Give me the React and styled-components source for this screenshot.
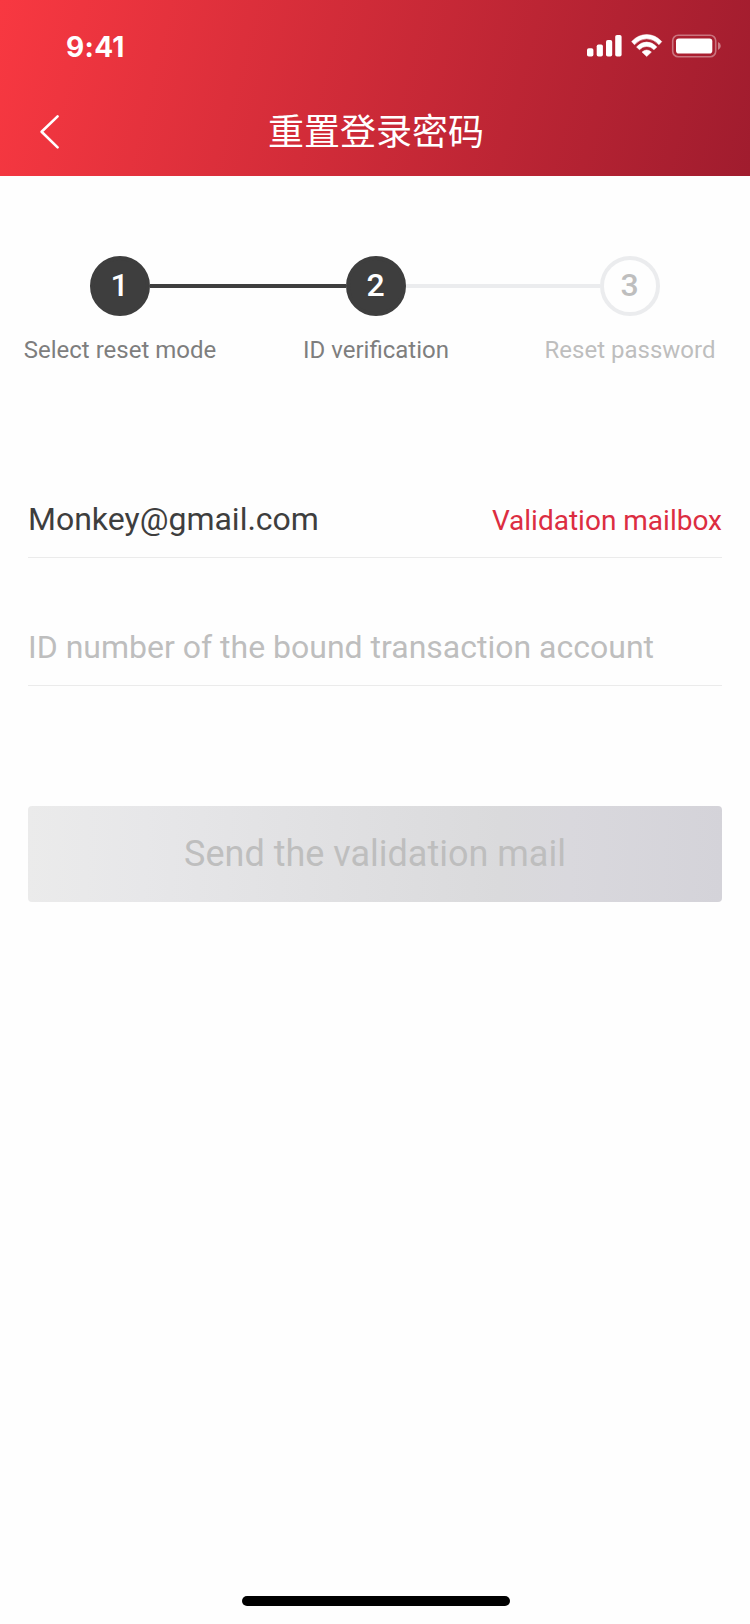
import React from "react";
import styled, { createGlobalStyle } from "styled-components";

const GlobalStyle = createGlobalStyle`
  * { box-sizing: border-box; }
  body {
    margin: 0;
    background: #fefefe;
    font-family: Roboto, "Noto Sans CJK SC", sans-serif;
  }
`;

const Screen = styled.div`
  width: 750px;
  height: 1624px;
  display: flex;
  flex-direction: column;
  background: #fefefe;
  overflow: hidden;
`;

const Header = styled.header`
  height: 176px;
  flex: none;
  background: linear-gradient(104deg, #f83841 0%, #a01c2e 100%);
  color: #fff;
`;

const StatusBar = styled.div`
  height: 88px;
  display: flex;
  justify-content: space-between;
  padding: 30px 29px 0 66px;
`;

const Time = styled.span`
  font: 700 28px/34px Inter, sans-serif;
  letter-spacing: 0.3px;
`;

const StatusIcons = styled.svg`
  display: block;
  width: 135px;
  height: 30px;
`;

const NavBar = styled.div`
  height: 88px;
  display: grid;
  grid-template-columns: 100px 1fr 100px;
  align-items: center;
`;

const BackButton = styled.button`
  height: 88px;
  padding: 0 0 0 38px;
  border: 0;
  background: none;
  display: flex;
  align-items: center;
`;

const Title = styled.h1`
  margin: 0;
  padding: 0 0 6px 2px;
  text-align: center;
  font: 400 36px/52px "Noto Sans CJK SC", sans-serif;
`;

const Stepper = styled.div`
  display: flex;
  padding: 80px 90px 0;
  height: 284px;
`;

const Step = styled.div`
  width: 60px;
  flex: none;
  display: flex;
  flex-direction: column;
  align-items: center;
  gap: 20px;
`;

const StepCircle = styled.div`
  width: 60px;
  height: 60px;
  padding-right: 1px;
  border-radius: 50%;
  border: 4px solid ${(p) => (p.$active ? "#3e3e3e" : "#ebecee")};
  background: ${(p) => (p.$active ? "#3e3e3e" : "#fefefe")};
  color: ${(p) => (p.$active ? "#fff" : "#bebebe")};
  font-size: 32px;
  line-height: 50px;
  font-weight: 500;
  text-align: center;
`;

const StepLabel = styled.span`
  white-space: nowrap;
  font-size: 24px;
  line-height: 28px;
  color: ${(p) => (p.$active ? "#7e7e7e" : "#bebebe")};
`;

const Connector = styled.div`
  width: ${(p) => p.$width}px;
  height: 4px;
  margin-top: 28px;
  background: ${(p) => (p.$active ? "#3e3e3e" : "#ebecee")};
`;

const Form = styled.main`
  padding: 0 28px;
  display: flex;
  flex-direction: column;
`;

const Field = styled.div`
  height: ${(p) => p.$height}px;
  padding-bottom: 18px;
  border-bottom: 1px solid #ebebeb;
  display: flex;
  align-items: flex-end;
  justify-content: space-between;
`;

const FieldText = styled.span`
  font-size: 32px;
  line-height: 40px;
  white-space: nowrap;
  color: ${(p) => (p.$placeholder ? "#bebebe" : "#3e3e3e")};
`;

const FieldLink = styled.a`
  font-size: 28px;
  line-height: 36px;
  color: #dc2d41;
`;

const SubmitButton = styled.button`
  margin-top: 120px;
  height: 96px;
  border: 0;
  border-radius: 4px;
  background: linear-gradient(92deg, #ebebeb 0%, #e7e7e9 17%, #dadadc 68%, #d9d8dd 78%, #d4d3d9 100%);
  color: #bebebe;
  font: 400 36px/44px Roboto, sans-serif;
`;

const HomeIndicator = styled.div`
  width: 268px;
  height: 10px;
  border-radius: 5px;
  background: #000;
  margin: auto 0 18px 242px;
`;

export default function App() {
  return (
    <Screen>
      <GlobalStyle />
      <Header>
        <StatusBar>
          <Time>9:41</Time>
          <StatusIcons viewBox="586 30 135 30" fill="#fff">
            <rect x="587" y="48.3" width="6.4" height="8.3" rx="1.8" />
            <rect x="596.7" y="44.5" width="6.2" height="12.1" rx="1.8" />
            <rect x="606" y="40" width="6.2" height="16.6" rx="1.8" />
            <rect x="615.2" y="35" width="6.4" height="21.6" rx="1.8" />
            <path d="M631.6 41.6Q638 34.6 646.7 34.6Q655.4 34.6 661.8 41.6L659 44.7Q653.5 38.8 646.7 38.8Q639.9 38.8 634.4 44.7Z" strokeLinejoin="round" stroke="#fff" strokeWidth="0.5" />
            <path d="M636.5 46.9Q641 42 646.7 42Q652.4 42 656.9 46.9L654 49.8Q650.9 46.4 646.7 46.4Q642.5 46.4 639.4 49.8Z" strokeLinejoin="round" stroke="#fff" strokeWidth="0.5" />
            <path d="M642 52.1Q646.7 47.9 651.4 52.1L646.7 56.5Z" strokeLinejoin="round" stroke="#fff" strokeWidth="0.5" />
            <rect x="672.7" y="35.2" width="43" height="21.6" rx="5.5" fill="none" stroke="#fff" strokeOpacity="0.38" strokeWidth="1.6" />
            <rect x="676" y="38.5" width="36.3" height="15" rx="2.8" />
            <path d="M718 42V50Q720.8 48.8 720.8 46T718 42Z" fillOpacity="0.42" />
          </StatusIcons>
        </StatusBar>
        <NavBar>
          <BackButton aria-label="Back">
            <svg width="22" height="36" viewBox="38 114 22 36" fill="none" stroke="#fff" strokeWidth="2.6" strokeLinecap="round" strokeLinejoin="round">
              <path d="M57.6 116.4L41.6 131.8L57.6 147.4" />
            </svg>
          </BackButton>
          <Title>重置登录密码</Title>
        </NavBar>
      </Header>

      <Stepper>
        <Step>
          <StepCircle $active>1</StepCircle>
          <StepLabel $active>Select reset mode</StepLabel>
        </Step>
        <Connector $active $width={196} />
        <Step>
          <StepCircle $active>2</StepCircle>
          <StepLabel $active>ID verification</StepLabel>
        </Step>
        <Connector $width={194} />
        <Step>
          <StepCircle>3</StepCircle>
          <StepLabel>Reset password</StepLabel>
        </Step>
      </Stepper>

      <Form>
        <Field $height={98}>
          <FieldText>Monkey@gmail.com</FieldText>
          <FieldLink>Validation mailbox</FieldLink>
        </Field>
        <Field $height={128}>
          <FieldText $placeholder>ID number of the bound transaction account</FieldText>
        </Field>
        <SubmitButton>Send the validation mail</SubmitButton>
      </Form>

      <HomeIndicator />
    </Screen>
  );
}
